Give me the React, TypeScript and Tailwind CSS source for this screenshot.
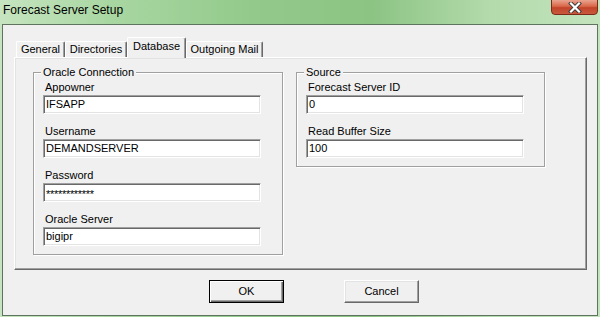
import React from 'react'

const font = { fontFamily: '"Liberation Sans", Arial, sans-serif' }

function Field({ label, value, password }: { label: string; value: string; password?: boolean }) {
  return (
    <div className="flex flex-col">
      <div className="pl-[2px] text-[11px] leading-[13px] text-black">{label}</div>
      <div className="mt-[1px] w-[218px] h-[19px] bg-white border border-t-[#a0a0a0] border-l-[#a0a0a0] border-r-white border-b-white shadow-[inset_1px_1px_0_#696969,inset_-1px_-1px_0_#e3e3e3] pl-[2px] flex items-center text-[11px] leading-[13px] text-black">
        {password ? <span className="inline-block translate-y-[2px] tracking-[-0.3px]">{value}</span> : value}
      </div>
    </div>
  )
}

function Group({ title, width, height, children }: { title: string; width: string; height: string; children: React.ReactNode }) {
  return (
    <fieldset className={`${width} ${height} border border-[#a0a0a0] shadow-[inset_1px_1px_0_#fff,1px_1px_0_#fff]`}>
      <legend className="ml-[7px] px-[2px] text-[11px] leading-[13px] bg-[#f0f0f0] text-black">{title}</legend>
      <div className="pl-[9px] pt-[2px] flex flex-col gap-[11px]">{children}</div>
    </fieldset>
  )
}

function Tab({ label, width, active }: { label: string; width: string; active?: boolean }) {
  if (active) {
    return (
      <div className={`${width} h-[21px] -mb-[1px] relative z-10 bg-[#f0f0f0] border-t border-l border-t-white border-l-white border-r border-r-[#696969] rounded-t-[2px] shadow-[inset_-1px_0_0_#a0a0a0] flex justify-center pt-[2px] text-[11px] leading-[13px] text-black`}>
        {label}
      </div>
    )
  }
  return (
    <div className={`${width} h-[16px] bg-[#f0f0f0] border-t border-l border-t-white border-l-white border-r border-r-[#696969] rounded-t-[2px] shadow-[inset_-1px_0_0_#a0a0a0] flex items-center justify-center text-[11px] leading-[13px] text-black`}>
      {label}
    </div>
  )
}

export default function App() {
  return (
    <div
      className="w-[600px] h-[317px] flex flex-col px-[2px] bg-[linear-gradient(90deg,#c6e4c0_0%,#a9d7a2_18%,#93ca8b_42%,#8cc484_62%,#b4dbac_82%,#c3e3bd_100%)] overflow-hidden"
      style={font}
    >
      <div className="h-[24px] flex justify-between items-start">
        <div className="pl-[1px] pt-[3px] text-[12px] leading-[14px] text-black">Forecast Server Setup</div>
        <div className="w-[47px] h-[16px] -mt-[1px] rounded-b-[4px] border border-[#7c2a18] bg-[linear-gradient(180deg,#eaa48f_0%,#d9674a_45%,#c2442a_55%,#c9583c_100%)] flex items-center justify-center">
          <svg width="14" height="11" viewBox="0 0 14 11">
            <path d="M3 1.5 L11 9.5 M11 1.5 L3 9.5" stroke="#3a3a3a" strokeWidth="4" strokeLinecap="square" />
            <path d="M3 1.5 L11 9.5 M11 1.5 L3 9.5" stroke="#ffffff" strokeWidth="2.2" strokeLinecap="square" />
          </svg>
        </div>
      </div>

      <div className="h-[292px] border border-[#5e745e] bg-[#f0f0f0] flex flex-col">
        <div className="ml-[11px] mt-[12px] flex flex-col">
          <div className="h-[20px] flex items-end pl-[2px]">
            <Tab label="General" width="w-[49px]" />
            <Tab label="Directories" width="w-[62px]" />
            <Tab label="Database" width="w-[59px]" active />
            <Tab label="Outgoing Mail" width="w-[77px]" />
          </div>
          <div className="w-[573px] h-[213px] border border-t-white border-l-white border-r-[#696969] border-b-[#696969] shadow-[inset_-1px_-1px_0_#a0a0a0,inset_1px_1px_0_#e3e3e3] pl-[18px] pt-[8px] flex items-start gap-[13px]">
            <Group title="Oracle Connection" width="w-[250px]" height="h-[189px]">
              <Field label="Appowner" value="IFSAPP" />
              <Field label="Username" value="DEMANDSERVER" />
              <Field label="Password" value="************" password />
              <Field label="Oracle Server" value="bigipr" />
            </Group>
            <Group title="Source" width="w-[249px]" height="h-[101px]">
              <Field label="Forecast Server ID" value="0" />
              <Field label="Read Buffer Size" value="100" />
            </Group>
          </div>
        </div>

        <div className="mt-[10px] pl-[206px] flex gap-[60px]">
          <button className="w-[75px] h-[23px] border border-black bg-[#f0f0f0] shadow-[inset_1px_1px_0_#fff,inset_-1px_-1px_0_#696969,inset_-2px_-2px_0_#a0a0a0] text-[11px] leading-[13px] text-black">
            OK
          </button>
          <button className="w-[75px] h-[23px] border border-t-white border-l-white border-r-[#696969] border-b-[#696969] bg-[#f0f0f0] shadow-[inset_-1px_-1px_0_#a0a0a0,inset_1px_1px_0_#e3e3e3] text-[11px] leading-[13px] text-black">
            Cancel
          </button>
        </div>
      </div>
    </div>
  )
}
